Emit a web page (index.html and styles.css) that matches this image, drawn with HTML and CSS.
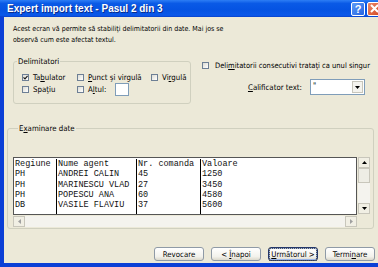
FILE: index.html
```html
<!DOCTYPE html>
<html>
<head>
  <meta charset="UTF-8">
  <title>Expert import text - Pasul 2 din 3</title>
  <link rel="stylesheet" href="styles.css">
</head>
<body>

  <div class="window">
    <div class="titlebar">
      <span class="title">Expert import text - Pasul 2 din 3</span>
      <div class="controls">
        <span class="ctl help">?</span>
        <span class="ctl close">
          <svg width="9" height="9" viewBox="0 0 9 9"><path d="M1 1L8 8M8 1L1 8" stroke="#fff" stroke-width="2"/></svg>
        </span>
      </div>
    </div>

    <div class="frame">
      <p class="intro">Acest ecran vă permite să stabiliţi delimitatorii din date. Mai jos se<br>observă cum este afectat textul.</p>

      <div class="options">
        <fieldset class="group delims">
          <legend>Delimitatori</legend>
          <div class="cb-grid">
            <label class="cb"><span class="box"><svg width="5" height="5" viewBox="0 0 5 5"><path d="M0.5 2.3L2 3.8L4.6 0.8" fill="none" stroke="#1a1a1a" stroke-width="1.2"/></svg></span><span>Ta<u>b</u>ulator</span></label>
            <label class="cb"><span class="box"></span><span><u>P</u>unct şi virgulă</span></label>
            <label class="cb"><span class="box"></span><span>Vi<u>r</u>gulă</span></label>
            <label class="cb"><span class="box"></span><span>Spa<u>ţ</u>iu</span></label>
            <label class="cb"><span class="box"></span><span>A<u>l</u>tul:</span><span class="other-input"></span></label>
          </div>
        </fieldset>

        <div class="side">
          <label class="cb"><span class="box"></span><span>Deli<u>m</u>itatorii consecutivi trataţi ca unul singur</span></label>
          <div class="qualifier">
            <span><u>C</u>alificator text:</span>
            <div class="combo">
              <span class="combo-value">"</span>
              <span class="combo-btn"><svg width="5" height="3" viewBox="0 0 5 3"><path d="M0 0H5L2.5 3Z" fill="#000"/></svg></span>
            </div>
          </div>
        </div>
      </div>

      <fieldset class="group preview">
        <legend>E<u>x</u>aminare date</legend>
        <div class="preview-top">
          <div class="grid">
            <div class="col c1">Regiune<br>PH<br>PH<br>PH<br>DB</div>
            <div class="col c2">Nume agent<br>ANDREI CALIN<br>MARINESCU VLAD<br>POPESCU ANA<br>VASILE FLAVIU</div>
            <div class="col c3">Nr. comanda<br>45<br>27<br>60<br>37</div>
            <div class="col c4">Valoare<br>1250<br>3450<br>4580<br>5600</div>
          </div>
          <div class="vscroll">
            <span class="sbtn"><svg width="5" height="3" viewBox="0 0 5 3"><path d="M0 3H5L2.5 0Z" fill="#000"/></svg></span>
            <span class="thumb"></span>
            <span class="track"></span>
            <span class="sbtn"><svg width="5" height="3" viewBox="0 0 5 3"><path d="M0 0H5L2.5 3Z" fill="#000"/></svg></span>
          </div>
        </div>
        <div class="hscroll">
          <span class="sbtn"><svg width="3" height="5" viewBox="0 0 3 5"><path d="M3 0V5L0 2.5Z" fill="#a0a0a0"/></svg></span>
          <span class="track"></span>
          <span class="sbtn"><svg width="3" height="5" viewBox="0 0 3 5"><path d="M0 0V5L3 2.5Z" fill="#a0a0a0"/></svg></span>
        </div>
      </fieldset>

      <div class="buttons">
        <button class="btn"><span>Revocare</span></button>
        <button class="btn"><span>&lt; <u>Î</u>napoi</span></button>
        <button class="btn default"><span class="focus"><u>U</u>rmătorul &gt;</span></button>
        <button class="btn"><span>Termi<u>n</u>are</span></button>
      </div>
    </div>
  </div>

</body>
</html>
```

FILE: styles.css
```css
body { margin: 0; font-family: "DejaVu Sans Condensed", "DejaVu Sans", sans-serif; font-size: 7.8px; color: #000; }
.window { width: 378px; height: 267px; display: flex; flex-direction: column; overflow: hidden; background: #ece9d8; }

/* title bar */
.titlebar { height: 17px; flex: none; display: flex; align-items: center; padding-left: 7px; background: linear-gradient(#2d7ef5, #0a5ae6 20%, #0553e2 60%, #0a58ea 90%, #0840c9); }
.title { color: #fff; font-family: "Liberation Sans", Arial, sans-serif; font-weight: bold; font-size: 10px; text-shadow: 1px 1px 0 #0a2c8a; }
.controls { margin-left: auto; margin-right: -4px; display: flex; gap: 2px; }
.ctl { width: 14px; height: 14px; box-sizing: border-box; border: 1px solid #fff; border-radius: 2px; display: flex; align-items: center; justify-content: center; color: #fff; font-family: "Liberation Sans", Arial, sans-serif; font-weight: bold; font-size: 11px; }
.help { background: linear-gradient(135deg, #5d9cf8, #2663e0); }
.close { width: 15px; background: linear-gradient(135deg, #e9896b, #d3461f); }

/* dialog body */
.frame { flex: 1; border-left: 4px solid #0b3fd6; border-bottom: 4px solid #0b3fd6; display: flex; flex-direction: column; }
.intro { margin: 7px 0 0 9px; font-size: 7px; line-height: 11px; }

.group { border: 1px solid #d0d0bf; border-radius: 3px; margin: 0; padding: 0; }
.group legend { padding: 0 1px; margin-left: 3px; line-height: 11px; }

.options { display: flex; margin-top: 10px; }
.delims { margin-left: 9px; width: 178px; box-sizing: border-box; height: 48px; }
.cb-grid { display: grid; grid-template-columns: 55px 74px auto; grid-auto-rows: 12px; align-items: center; padding: 4px 0 0 8px; }
.cb { display: flex; align-items: center; gap: 4px; white-space: nowrap; }
.box { width: 7px; height: 7px; box-sizing: border-box; border: 1px solid #6d7f95; background: linear-gradient(135deg, #dcdcd4, #fff); display: flex; align-items: center; justify-content: center; }
.other-input { width: 14px; height: 13px; box-sizing: border-box; margin-left: 5px; background: #fff; border: 1px solid #7f9db9; }

.side { flex: 1; padding: 5px 0 0 11px; }
.side .cb { gap: 6px; font-size: 7.5px; }
.qualifier { display: flex; align-items: center; justify-content: flex-end; gap: 8px; margin: 9px 13px 0 0; }
.combo { width: 55px; height: 16px; box-sizing: border-box; border: 1px solid #7f9db9; background: #fff; display: flex; }
.combo-value { flex: 1; padding: 1px 0 0 2px; }
.combo-btn { width: 11px; margin: 1px; box-sizing: border-box; border: 1px solid #c8c6bb; background: #f4f3ee; display: flex; align-items: center; justify-content: center; }

/* preview */
.preview { margin: 19px 4px 0 3px; padding: 0 0 1px 5px; }
.preview legend { margin-left: 5px; }
.preview-top { display: flex; margin-top: 23px; }
.grid { width: 344px; height: 58px; box-sizing: border-box; border: 1px solid #555; background: #fff; display: flex; font-family: "Liberation Mono", "Courier New", monospace; font-size: 8.5px; line-height: 10.3px; padding-top: 1px; color: #111; }
.col { border-right: 1px solid #000; padding-left: 1px; white-space: nowrap; }
.c1 { width: 41px; }
.c2 { width: 78px; }
.c3 { width: 62px; }
.c4 { flex: 1; border-right: none; }
.vscroll { width: 12px; margin-left: 1px; height: 57px; display: flex; flex-direction: column; background: #f4f3ee; }
.sbtn { width: 12px; height: 11px; flex: none; box-sizing: border-box; border: 1px solid #c8c6bb; background: #f1efe4; display: flex; align-items: center; justify-content: center; }
.thumb { height: 13px; border: 1px solid #c8c6bb; background: #eeede5; }
.track { flex: 1; }
.hscroll { width: 344px; height: 11px; margin-top: 1px; display: flex; background: #f4f3ee; }

/* buttons */
.buttons { display: flex; justify-content: flex-end; gap: 7px; margin-top: 18px; padding-right: 3px; }
.btn { width: 50px; height: 14px; padding: 0; font: inherit; color: #000; border: 1px solid #8f9aa6; border-radius: 3px; background: linear-gradient(#fff, #f3f2ec 70%, #dcd9cc); display: flex; align-items: center; justify-content: center; }
.btn.default { border-color: #25386a; box-shadow: inset 0 0 0 1px #9ab5e6; }
.focus { outline: 1px dotted #555; outline-offset: 1px; }
```
